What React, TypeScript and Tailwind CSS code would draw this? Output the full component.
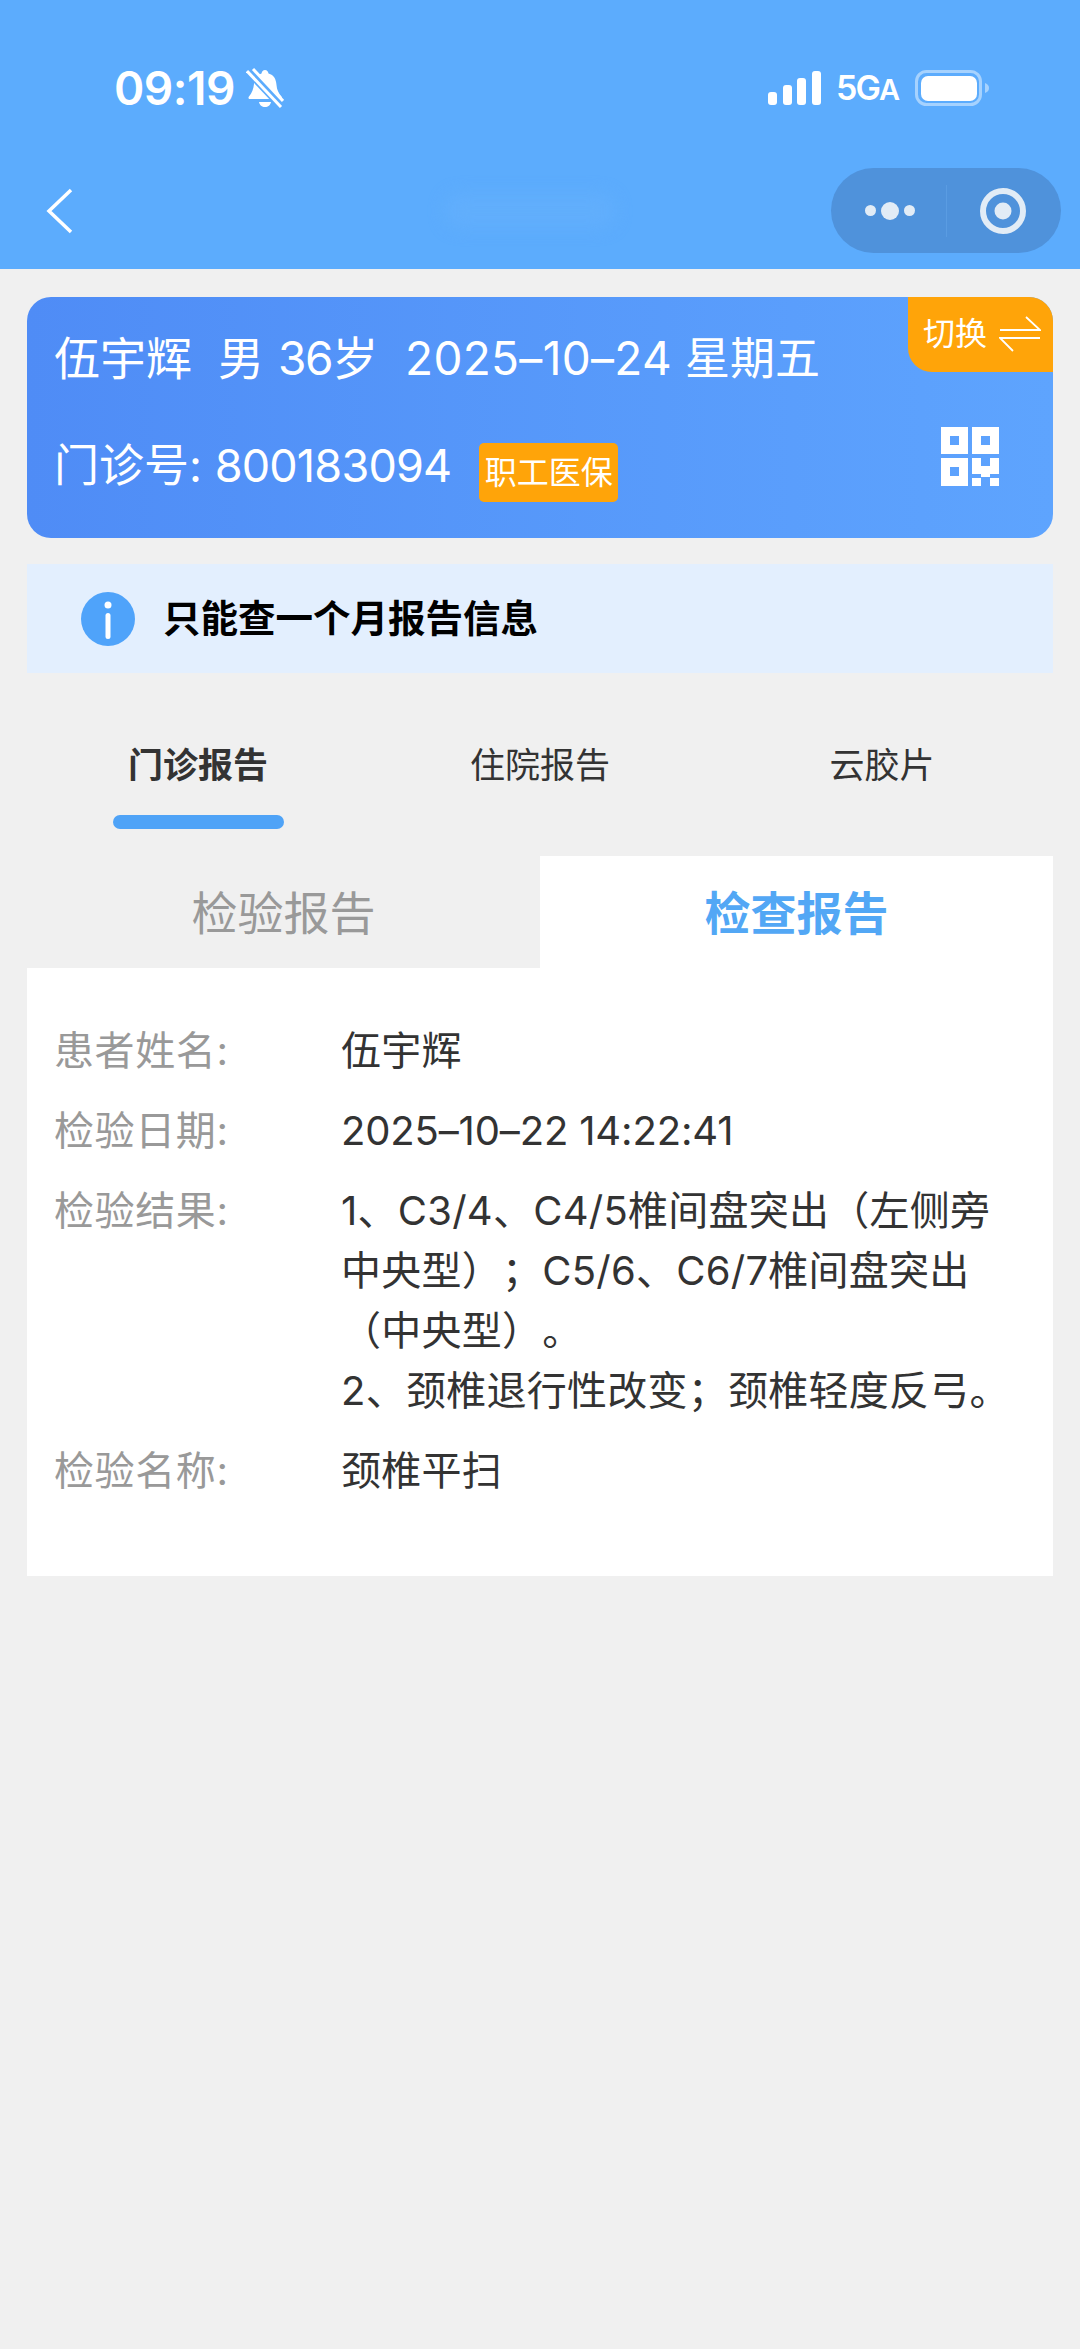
import React from 'react';

const font = { fontFamily: 'Inter, "Noto Sans CJK SC", sans-serif' };

const rows = [
    { label: '患者姓名:', lines: ['伍宇辉'] },
    { label: '检验日期:', lines: ['2025–10–22 14:22:41'], numeric: true },
    {
        label: '检验结果:',
        lines: ['1、C3/4、C4/5椎间盘突出（左侧旁', '中央型）；C5/6、C6/7椎间盘突出', '（中央型）。', '2、颈椎退行性改变；颈椎轻度反弓。'],
    },
    { label: '检验名称:', lines: ['颈椎平扫'] },
];

const BellOff = () => (
    <svg width="38" height="40" viewBox="0 0 38 40" fill="none">
        <path d="M19 2c2 0 3 1.500 3.500 3.500C28 7 30 11 30.500 17c.4 5 2 8 5 11.500.8 1 .3 2.500-1 2.500H4c-1.500 0-2-1.500-1-2.500C6 25 7.500 21 8 16 8.500 11 11 7 15.500 5.500 16 3.500 17 2 19 2z" fill="white" />
        <path d="M13 34h12c-.5 3-3 5-6 5s-5.500-2-6-5z" fill="white" />
        <path d="M1 1l35 37" stroke="#5CACFD" strokeWidth="9" />
        <path d="M1 3l34 36" stroke="white" strokeWidth="3" />
        <path d="M7 1l30 32" stroke="white" strokeWidth="3" />
    </svg>
);

const Signal = () => (
    <svg width="54" height="34" viewBox="0 0 54 34" fill="white">
        <rect x="0" y="21" width="9" height="13" rx="3" />
        <rect x="15" y="14" width="9" height="20" rx="3" />
        <rect x="29" y="7" width="9" height="27" rx="3" />
        <rect x="44" y="0" width="9" height="34" rx="3" />
    </svg>
);

const Battery = () => (
    <svg width="75" height="36" viewBox="0 0 75 36" fill="none">
        <rect x="1.500" y="1.500" width="64" height="33" rx="10" stroke="#A6D2FE" strokeWidth="3" />
        <rect x="6" y="6" width="56" height="25" rx="7" fill="white" />
        <path d="M70 13c3 1 4 3 4 5s-1 4-4 5z" fill="#A6D2FE" />
    </svg>
);

const SwitchArrows = () => (
    <svg width="42" height="36" viewBox="0 0 42 36" fill="none" stroke="white" strokeWidth="1.800">
        <path d="M1 14h40L27 1" />
        <path d="M41 22H1l13 13" />
    </svg>
);

const QrIcon = () => (
    <svg width="58" height="59" viewBox="0 0 58 59" fill="white">
        <path fillRule="evenodd" d="M0 0h27v27H0zM9 9v9h9V9zM31 0h27v27H31zM40 9v9h9V9zM0 31h27v28H0zM9 40v9h9v-9z" />
        <path d="M31 31h9v8h9v-8h9v16h-9v3h-9v-3h-9zM31 51h9v8h-9zM49 51h9v8h-9z" />
    </svg>
);

const InfoIcon = () => (
    <svg width="54" height="54" viewBox="0 0 54 54">
        <circle cx="27" cy="27" r="27" fill="#4FA3FA" />
        <circle cx="27" cy="13" r="3.500" fill="white" />
        <rect x="24.500" y="21" width="5" height="26" rx="2.500" fill="white" />
    </svg>
);

export default function App() {
    return (
        <div className="min-h-[2349px] bg-[#F0F0F0] [text-spacing-trim:space-all]" style={font}>
            <header className="h-[269px] bg-[#5CACFD] pt-[68px]">
                <div className="flex h-[40px] items-center pl-[114px] pr-[90px]">
                    <span className="text-[46px] font-semibold leading-none tracking-[-0.5px] text-white">09:19</span>
                    <span className="ml-[11px] flex"><BellOff /></span>
                    <span className="ml-auto flex"><Signal /></span>
                    <span className="ml-[14px] text-[34px] font-semibold leading-none tracking-[-2px] text-white">
                        5G<span className="text-[29px]">A</span>
                    </span>
                    <span className="ml-[17px] flex"><Battery /></span>
                </div>
                <div className="mt-[60px] flex h-[85px] items-center pl-[45px] pr-[19px]">
                    <svg width="28" height="46" viewBox="0 0 28 46" fill="none" stroke="white" strokeWidth="3.500">
                        <path d="M26 2L4 23l22 21" />
                    </svg>
                    <div className="ml-[372px] h-[34px] w-[170px] rounded-full bg-[#61AEFC] blur-[8px]"></div>
                    <div className="ml-auto flex h-[85px] w-[230px] items-center rounded-full bg-[#4F92DB]">
                        <div className="flex w-[115px] items-center justify-center gap-[5px] pl-[2px]">
                            <span className="h-[11px] w-[11px] rounded-full bg-[#E2ECF6]"></span>
                            <span className="h-[18px] w-[18px] rounded-full bg-[#E2ECF6]"></span>
                            <span className="h-[11px] w-[11px] rounded-full bg-[#E2ECF6]"></span>
                        </div>
                        <div className="h-[52px] w-px bg-[#5A9CE2]"></div>
                        <div className="flex flex-1 items-center justify-center pr-[2px]">
                            <svg width="46" height="46" viewBox="0 0 46 46">
                                <circle cx="23" cy="23" r="20" fill="none" stroke="#E2ECF6" strokeWidth="6" />
                                <circle cx="23" cy="23" r="8.500" fill="#E2ECF6" />
                            </svg>
                        </div>
                    </div>
                </div>
            </header>

            <main className="px-[27px]">
                <section className="relative mt-[28px] h-[241px] overflow-hidden rounded-[24px] bg-gradient-to-r from-[#4F8CF6] to-[#5EA4FE] pl-[27px] pr-[54px] pt-[31px] text-white">
                    <div className="flex items-baseline whitespace-nowrap text-[46px] leading-[60px]">
                        <span>伍宇辉</span>
                        <span className="ml-[26px]">男</span>
                        <span className="ml-[14px] tracking-[-1.300px]">36岁</span>
                        <span className="ml-[28px] tracking-[0.300px]">2025–10–24</span>
                        <span className="ml-[13px] text-[45px]">星期五</span>
                    </div>
                    <div className="mt-[38px] flex h-[75px]">
                        <span className="mb-[6px] self-end whitespace-nowrap text-[45px] leading-[60px]">
                            门诊号: <span className="tracking-[-0.800px]">800183094</span>
                        </span>
                        <span className="ml-[28px] flex h-[59px] w-[139px] items-center justify-center self-end rounded-[5px] bg-[#FFA409] text-[32px] leading-none">职工医保</span>
                        <span className="ml-auto flex self-start"><QrIcon /></span>
                    </div>
                    <div className="absolute right-0 top-0 flex h-[75px] w-[145px] items-center gap-[12px] rounded-bl-[24px] bg-[#FFA409] pb-[2px] pl-[15px] text-[32px] leading-none">
                        切换
                        <SwitchArrows />
                    </div>
                </section>

                <section className="mt-[26px] flex h-[109px] items-center gap-[28px] bg-[#E3EFFE] pl-[54px]">
                    <InfoIcon />
                    <span className="text-[37.500px] font-bold leading-none text-black">只能查一个月报告信息</span>
                </section>

                <nav className="grid grid-cols-3 pt-[67px] text-center text-[35px] leading-[50px] text-[#333333]">
                    <div className="flex flex-col items-center">
                        <span className="font-bold">门诊报告</span>
                        <span className="mt-[25px] h-[14px] w-[171px] rounded-full bg-[#4FA3F7]"></span>
                    </div>
                    <div>住院报告</div>
                    <div>云胶片</div>
                </nav>

                <div className="mt-[27px] grid grid-cols-2 text-center text-[46px] leading-none">
                    <div className="flex h-[112px] items-center justify-center pt-[2px] text-[#999999]">检验报告</div>
                    <div className="flex h-[112px] items-center justify-center bg-white pt-[2px] font-bold text-[#52A7F5]">检查报告</div>
                </div>

                <section className="flex h-[608px] flex-col gap-[20px] bg-white pl-[27px] pt-[53px] text-[40px] leading-[60px]">
                    {rows.map(row => (
                        <div key={row.label} className="flex">
                            <div className="w-[287px] shrink-0 tracking-[0.600px] text-[#999999]">{row.label}</div>
                            <div className={row.numeric ? 'tracking-[-0.150px] text-[#333333]' : 'tracking-[0.250px] text-[#333333]'}>
                                {row.lines.map(line => (
                                    <div key={line} className="whitespace-nowrap">{line}</div>
                                ))}
                            </div>
                        </div>
                    ))}
                </section>
            </main>
        </div>
    );
}
